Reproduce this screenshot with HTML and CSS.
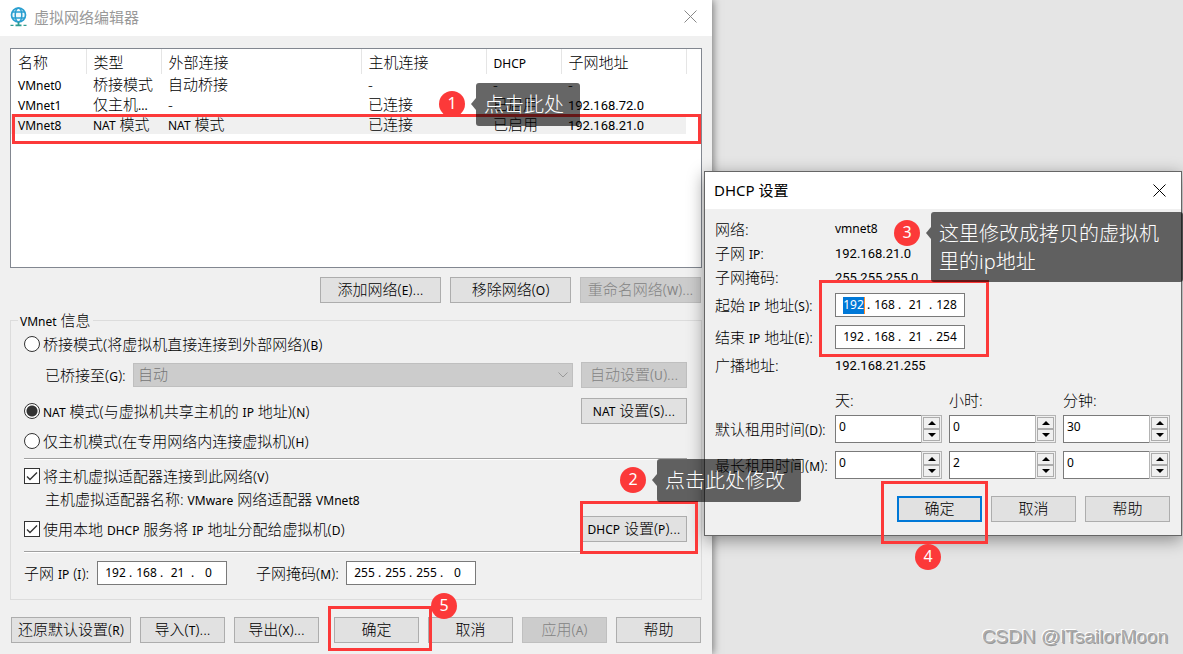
FILE: index.html
```html
<!DOCTYPE html>
<html lang="zh-CN">
<head>
<meta charset="utf-8">
<title>虚拟网络编辑器</title>
<link rel="stylesheet" href="styles.css">
</head>
<body>
<main class="desktop">
  <section class="window editor">
    <header class="titlebar titlebar-idle">
      <svg class="app-icon" viewBox="0 0 17 20" aria-hidden="true">
        <circle cx="8.500" cy="8" r="7" fill="#eef8fc" stroke="#2a9fd0" stroke-width="1.700"/>
        <ellipse cx="8.500" cy="8" rx="3.300" ry="7" fill="none" stroke="#2a9fd0" stroke-width="1.500"/>
        <path d="M2 5h13M2 11h13" stroke="#2a9fd0" stroke-width="1.500"/>
        <path d="M8.500 15v3M5.500 18.300h6" stroke="#2d9c91" stroke-width="1.800"/>
        <path d="M.5 18.300h3M13.500 18.300h3" stroke="#2d9c91" stroke-width="1.200"/>
      </svg>
      <h1 class="title">虚拟网络编辑器</h1>
      <button class="close" type="button" aria-label="关闭"><svg viewBox="0 0 13 13"><path d="M.5.5l12 12M12.500.5l-12 12"/></svg></button>
    </header>
    <div class="editor-body">
      <div class="list">
        <table class="networks">
          <colgroup><col class="c75"><col class="c75"><col class="c200"><col class="c125"><col class="c75"><col class="c125"></colgroup>
          <thead><tr><th>名称</th><th>类型</th><th>外部连接</th><th>主机连接</th><th><span class="en">DHCP</span></th><th>子网地址</th></tr></thead>
          <tbody>
            <tr><td><span class="en">VMnet0</span></td><td>桥接模式</td><td>自动桥接</td><td>-</td><td>-</td><td>-</td></tr>
            <tr><td><span class="en">VMnet1</span></td><td>仅主机<span class="en">...</span></td><td>-</td><td>已连接</td><td>已启用</td><td><span class="num">192.168.72.0</span></td></tr>
            <tr class="selected"><td><span class="en">VMnet8</span></td><td><span class="en">NAT</span> 模式</td><td><span class="en">NAT</span> 模式</td><td>已连接</td><td>已启用</td><td><span class="num">192.168.21.0</span></td></tr>
          </tbody>
        </table>
      </div>
      <div class="list-actions">
        <button class="btn btn-wide" type="button">添加网络(<span class="en">E</span>)...</button>
        <button class="btn btn-wide" type="button">移除网络(<span class="en">O</span>)</button>
        <button class="btn btn-wide" type="button" disabled>重命名网络(<span class="en">W</span>)...</button>
      </div>
      <fieldset class="group">
        <legend><span class="en">VMnet</span> 信息</legend>
        <div class="row row-first">
          <input type="radio" name="mode" id="bridged"><label for="bridged">桥接模式(将虚拟机直接连接到外部网络)(<span class="en">B</span>)</label>
        </div>
        <div class="row row-b">
          <label class="indent" for="bridge-to">已桥接至(<span class="en">G</span>):</label>
          <span class="select-wrap"><select id="bridge-to" disabled><option>自动</option></select>
          <svg class="chevron" viewBox="0 0 10 6"><path d="M.5.5L5 5 9.500.5"/></svg></span>
          <button class="btn btn-set" type="button" disabled>自动设置(<span class="en">U</span>)...</button>
        </div>
        <div class="row row-c">
          <input type="radio" name="mode" id="nat" checked><label for="nat"><span class="en">NAT</span> 模式(与虚拟机共享主机的 <span class="en">IP</span> 地址)(<span class="en">N</span>)</label>
          <button class="btn btn-set push" type="button"><span class="en">NAT</span> 设置(<span class="en">S</span>)...</button>
        </div>
        <div class="row row-d">
          <input type="radio" name="mode" id="hostonly"><label for="hostonly">仅主机模式(在专用网络内连接虚拟机)(<span class="en">H</span>)</label>
        </div>
        <hr>
        <div class="row row-e">
          <input type="checkbox" id="adapter" checked><label for="adapter">将主机虚拟适配器连接到此网络(<span class="en">V</span>)</label>
        </div>
        <p class="indent note">主机虚拟适配器名称: <span class="en">VMware</span> 网络适配器 <span class="en">VMnet8</span></p>
        <div class="row row-g">
          <input type="checkbox" id="dhcp" checked><label for="dhcp">使用本地 <span class="en">DHCP</span> 服务将 <span class="en">IP</span> 地址分配给虚拟机(<span class="en">D</span>)</label>
          <button class="btn btn-set push" type="button"><span class="en">DHCP</span> 设置(<span class="en">P</span>)...</button>
        </div>
        <hr class="hr-low">
        <div class="row row-h">
          <label class="subnet-label" for="subnet">子网 <span class="en">IP</span> (<span class="en">I</span>):</label>
          <span class="ip"><input id="subnet" value="192"><i>.</i><input aria-label="子网 IP 2" value="168"><i>.</i><input aria-label="子网 IP 3" value="21"><i>.</i><input aria-label="子网 IP 4" value="0"></span>
          <label class="mask-label" for="mask">子网掩码(<span class="en">M</span>):</label>
          <span class="ip"><input id="mask" value="255"><i>.</i><input aria-label="子网掩码 2" value="255"><i>.</i><input aria-label="子网掩码 3" value="255"><i>.</i><input aria-label="子网掩码 4" value="0"></span>
        </div>
      </fieldset>
      <footer class="footer">
        <button class="btn btn-reset" type="button">还原默认设置(<span class="en">R</span>)</button>
        <button class="btn btn-std" type="button">导入(<span class="en">T</span>)...</button>
        <button class="btn btn-std" type="button">导出(<span class="en">X</span>)...</button>
        <button class="btn btn-std push" type="button">确定</button>
        <button class="btn btn-std" type="button">取消</button>
        <button class="btn btn-std" type="button" disabled>应用(<span class="en">A</span>)</button>
        <button class="btn btn-std" type="button">帮助</button>
      </footer>
    </div>
  </section>

  <section class="window dialog">
    <header class="titlebar">
      <h2 class="title">DHCP 设置</h2>
      <button class="close" type="button" aria-label="关闭"><svg viewBox="0 0 13 13"><path d="M.5.5l12 12M12.500.5l-12 12"/></svg></button>
    </header>
    <div class="dialog-body">
      <div class="info"><span>网络:</span><span class="en">vmnet8</span></div>
      <div class="info"><span>子网 <span class="en">IP</span>:</span><span class="num">192.168.21.0</span></div>
      <div class="info"><span>子网掩码:</span><span class="num">255.255.255.0</span></div>
      <div class="info range">
        <label for="start">起始 <span class="en">IP</span> 地址(<span class="en">S</span>):</label>
        <span class="ip"><input id="start" class="picked" value="192"><i>.</i><input aria-label="起始 2" value="168"><i>.</i><input aria-label="起始 3" value="21"><i>.</i><input aria-label="起始 4" value="128"></span>
      </div>
      <div class="info range-end">
        <label for="end">结束 <span class="en">IP</span> 地址(<span class="en">E</span>):</label>
        <span class="ip"><input id="end" value="192"><i>.</i><input aria-label="结束 2" value="168"><i>.</i><input aria-label="结束 3" value="21"><i>.</i><input aria-label="结束 4" value="254"></span>
      </div>
      <div class="info broadcast"><span>广播地址:</span><span class="num">192.168.21.255</span></div>
      <div class="lease lease-head"><span></span><span>天:</span><span>小时:</span><span>分钟:</span></div>
      <div class="lease">
        <label for="def-d">默认租用时间(<span class="en">D</span>):</label>
        <span class="spin"><input id="def-d" value="0"><span class="arrows"><button type="button" class="up" aria-label="增加"></button><button type="button" class="down" aria-label="减少"></button></span></span>
        <span class="spin"><input aria-label="默认小时" value="0"><span class="arrows"><button type="button" class="up" aria-label="增加"></button><button type="button" class="down" aria-label="减少"></button></span></span>
        <span class="spin"><input aria-label="默认分钟" value="30"><span class="arrows"><button type="button" class="up" aria-label="增加"></button><button type="button" class="down" aria-label="减少"></button></span></span>
      </div>
      <div class="lease lease-max">
        <label for="max-d">最长租用时间(<span class="en">M</span>):</label>
        <span class="spin"><input id="max-d" value="0"><span class="arrows"><button type="button" class="up" aria-label="增加"></button><button type="button" class="down" aria-label="减少"></button></span></span>
        <span class="spin"><input aria-label="最长小时" value="2"><span class="arrows"><button type="button" class="up" aria-label="增加"></button><button type="button" class="down" aria-label="减少"></button></span></span>
        <span class="spin"><input aria-label="最长分钟" value="0"><span class="arrows"><button type="button" class="up" aria-label="增加"></button><button type="button" class="down" aria-label="减少"></button></span></span>
      </div>
      <div class="dialog-actions">
        <button class="btn btn-std btn-default" type="button">确定</button>
        <button class="btn btn-std" type="button">取消</button>
        <button class="btn btn-std" type="button">帮助</button>
      </div>
    </div>
  </section>

  <div class="frame frame-row"></div>
  <div class="frame frame-dhcp"></div>
  <div class="frame frame-range"></div>
  <div class="frame frame-confirm"></div>
  <div class="frame frame-ok"></div>
  <span class="step step-1">1</span>
  <span class="step step-2">2</span>
  <span class="step step-3">3</span>
  <span class="step step-4">4</span>
  <span class="step step-5">5</span>
  <div class="tip tip-1">点击此处</div>
  <div class="tip tip-2">点击此处修改</div>
  <div class="tip tip-3">这里修改成拷贝的虚拟机<br>里的ip地址</div>
  <div class="credit">CSDN @ITsailorMoon</div>
</main>
</body>
</html>
```
FILE: styles.css
```css
* { box-sizing: border-box; }

body {
  margin: 0;
  background: #e5e5e5;
  color: #000;
  font: 300 15px/20px "Noto Sans", "Noto Sans CJK SC", sans-serif;
}

button, input, select { margin: 0; font: inherit; color: inherit; }

.desktop { position: relative; min-height: 100vh; overflow: hidden; }
.en { font-size: 12px; font-weight: 400; line-height: 1; }
.num { font: 13px/1 Roboto, "Noto Sans", sans-serif; }

/* windows */
.window { background: #f0f0f0; }
.editor { width: calc(100% - 471px); min-height: 100vh; box-shadow: 1px 0 8px rgba(0, 0, 0, .5); }
.titlebar { display: flex; align-items: center; height: 36px; padding: 0 15px 3px 10px; background: #fff; }
.app-icon { width: 17px; height: 20px; margin-right: 7px; }
.title { margin: 0; font-size: 15px; font-weight: 400; line-height: 20px; }
.titlebar-idle .title { color: #999; }
.close { display: flex; margin-left: auto; padding: 0; border: 0; background: none; }
.close svg { width: 13px; height: 13px; fill: none; stroke: #000; }
.titlebar-idle .close svg { stroke: #888; }
.editor-body { padding: 12px 10px 0; }

/* network list */
.list { height: 220px; border: 1px solid #828790; background: #fff; }
.networks { width: 675px; border-collapse: collapse; table-layout: fixed; }
.c75 { width: 75px; }
.c125 { width: 125px; }
.c200 { width: 200px; }
.networks th, .networks td { height: 20px; padding: 0 0 0 7px; text-align: left; font-weight: inherit; line-height: 20px; white-space: nowrap; }
.networks th { height: 25px; border-right: 1px solid #e5e5e5; }
.networks .en, .networks .num { line-height: 1; }
.selected { background: #f0f0f0; }

/* buttons */
.btn { height: 26px; padding: 0 0 2px; border: 1px solid #adadad; background: #e1e1e1; line-height: 20px; white-space: nowrap; }
.btn:disabled { border-color: #bfbfbf; background: #ccc; color: #838383; }
.btn-wide { width: 121px; }
.btn-reset { width: 120px; }
.btn-std { width: 85px; }
.btn-set { width: 106px; }
.btn-default { border: 2px solid #0078d7; }
.push { margin-left: auto; }
.list-actions { display: flex; justify-content: flex-end; gap: 9px; padding: 9px 1px 7px 0; }

/* VMnet group */
.group { min-width: 0; margin: 0; padding: 0 14px 14px 13px; border: 1px solid #dcdcdc; }
.group legend { height: 20px; margin-left: -6px; padding: 0 2px; }
.row { display: flex; align-items: center; min-height: 20px; }
.row-first { margin-top: 4px; }
.row-b { margin-top: 8px; }
.row-c { margin-top: 10px; }
.row-d { margin-top: 7px; }
.row-e { margin-top: 6px; }
.row-g { margin-top: 7px; }
.row-h { margin-top: 8px; }
.indent { margin: 3px 0 0 21px; }
.row-b .indent { width: 88px; margin-top: 0; }
.group hr { height: 2px; margin: 7px 0 0; border: 0; border-top: 1px solid #a0a0a0; background: #fff; }
.group .hr-low { margin-top: 9px; }
.row input[type="radio"], .row input[type="checkbox"] {
  appearance: none; flex: none; width: 16px; height: 16px; margin-right: 3px;
  border: 1px solid #333; background: #fff;
}
.row input[type="radio"] { border-radius: 50%; }
.row input[type="radio"]:checked { background: radial-gradient(circle, #333 5px, #fff 6px); }
.row input[type="checkbox"]:checked {
  background: #fff url("data:image/svg+xml,%3Csvg xmlns='http://www.w3.org/2000/svg' viewBox='0 0 14 14'%3E%3Cpath d='M2 7.500l3 3 7-7' fill='none' stroke='%23333' stroke-width='1.400'/%3E%3C/svg%3E");
}
.select-wrap { position: relative; flex: 1; margin-right: 8px; }
.select-wrap select { display: block; width: 100%; height: 24px; padding: 0 4px 2px; appearance: none; border: 1px solid #bfbfbf; border-radius: 0; background: #ccc; color: #777; opacity: 1; }
.chevron { position: absolute; top: 9px; right: 5px; width: 10px; height: 6px; fill: none; stroke: #999; }
.subnet-label { width: 73px; white-space: nowrap; }
.mask-label { width: 90px; margin-left: 29px; white-space: nowrap; }

/* dotted address field */
.ip { display: flex; align-items: center; width: 130px; height: 24px; padding: 0 4px; border: 1px solid #7a7a7a; background: #fff; }
.ip input { width: 27px; height: 18px; padding: 0; border: 0; background: none; text-align: center; font-size: 12px; font-weight: 400; line-height: 18px; }
.ip i { width: 4px; font-size: 12px; font-style: normal; font-weight: 400; }
.ip .picked { width: 22px; height: 17px; margin: 0 2px 0 3px; border-right: 1px solid #ff8a28; background: #0078d7; color: #fff; }

.footer { display: flex; gap: 9px; padding: 17px 1px 0; }

/* DHCP dialog */
.dialog { position: absolute; top: 171px; right: 1px; width: 478px; border: 1px solid #666; box-shadow: 0 4px 16px rgba(0, 0, 0, .4); }
.dialog .titlebar { height: 37px; padding: 0 15px 1px 9px; }
.dialog-body { padding: 8px 11px 13px 10px; }
.info { display: grid; grid-template-columns: 120px 1fr; align-items: center; height: 24px; white-space: nowrap; }
.range { margin-top: 4px; }
.range-end { margin-top: 8px; }
.broadcast { margin-top: 4px; }
.lease { display: grid; grid-template-columns: 113px repeat(3, minmax(0, 1fr)); column-gap: 7px; align-items: center; white-space: nowrap; }
.lease-head { margin: 13px 0 5px; }
.lease-max { margin-top: 8px; }
.spin { display: flex; height: 28px; }
.spin > input { flex: 1; min-width: 0; padding: 0 3px 5px; border: 1px solid #7a7a7a; border-right: 0; background: #fff; font-size: 12px; font-weight: 400; }
.arrows { display: grid; flex: none; grid-template-rows: 1fr 1fr; width: 21px; padding: 1px; border: 1px solid #b4b4b4; }
.arrows button { display: flex; align-items: center; justify-content: center; padding: 0; border: 1px solid #acacac; background: #f0f0f0; }
.arrows button::before { content: ""; border: 4px solid transparent; }
.arrows .up::before { border-top: 0; border-bottom-color: #000; }
.arrows .down::before { border-bottom: 0; border-top-color: #000; }
.dialog-actions { display: flex; justify-content: flex-end; gap: 9px; margin-top: 17px; }

/* tutorial marks over the windows */
.frame { position: absolute; border: 3px solid #fc3939; pointer-events: none; }
.frame-row { left: 12px; top: 114px; width: 689px; height: 30px; }
.frame-dhcp { left: 580px; top: 501px; width: 118px; height: 53px; }
.frame-range { left: 819px; top: 280px; width: 170px; height: 77px; }
.frame-confirm { left: 881px; top: 481px; width: 107px; height: 63px; }
.frame-ok { left: 328px; top: 606px; width: 104px; height: 45px; }
.step { position: absolute; width: 26px; height: 26px; border-radius: 50%; background: #fc3939; color: #fff; font-size: 16px; font-weight: 400; line-height: 24px; text-align: center; }
.step-1 { left: 439px; top: 91px; }
.step-2 { left: 620px; top: 467px; }
.step-3 { left: 894px; top: 220px; }
.step-4 { left: 915px; top: 544px; }
.step-5 { left: 431px; top: 593px; }
.tip { position: absolute; padding: 8px 16px 7px 8px; border-radius: 3px; background: rgba(0, 0, 0, .6); color: #fff; font-size: 20px; line-height: 28px; white-space: nowrap; }
.tip::before { content: ""; position: absolute; left: -5px; top: 15px; border: 6px solid transparent; border-left: 0; border-right: 5px solid rgba(0, 0, 0, .6); }
.tip-1 { left: 476px; top: 83px; }
.tip-2 { left: 657px; top: 459px; }
.tip-3 { left: 931px; right: 0; top: 212px; padding: 8px 8px 6px; }
.credit { position: absolute; right: 15px; bottom: 5px; color: #aaa; font: 19px/24px "Liberation Sans", sans-serif; text-shadow: -1px -1px #fff, 1px 1px #999; }
```
